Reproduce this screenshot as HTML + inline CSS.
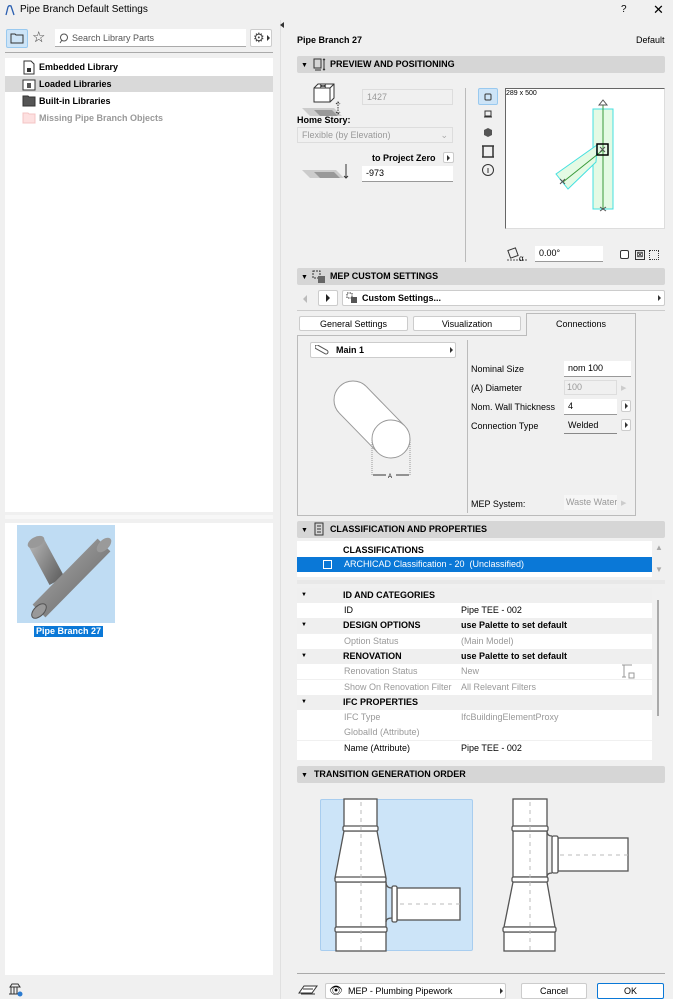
<!DOCTYPE html>
<html><head><meta charset="utf-8"><style>
*{margin:0;padding:0;box-sizing:border-box}
body{width:673px;height:999px;background:#f0f0f0;font-family:"Liberation Sans",sans-serif;font-size:9px;color:#000;position:relative;overflow:hidden}
.a{position:absolute;white-space:nowrap}
.b{font-weight:bold}
.hdr{position:absolute;left:297px;width:368px;height:17px;background:#d6d6d6;border-radius:2px;font-weight:bold;font-size:9px;line-height:17px}
.fld{position:absolute;background:#fff;border-bottom:1px solid #999;height:16px;line-height:15px;padding-left:4px}
.dis{background:#f0f0f0;border:1px solid #ddd;color:#999}
.btn{position:absolute;background:#fff;border:1px solid #ccc;border-radius:2px;text-align:center;line-height:14px}
.tri{position:absolute;width:0;height:0;border-left:3px solid #333;border-top:3px solid transparent;border-bottom:3px solid transparent}
.row{position:absolute;left:297px;width:355px;height:15px;line-height:15px}
.g{background:#efefef;font-weight:bold}
.w{background:#fff}
.gr{color:#999}
</style></head><body>
<!-- title bar -->
<svg class="a" style="left:5px;top:4px" width="10" height="12"><path d="M1 11 L3 3 Q4 1 6 2 L9 11" fill="none" stroke="#2b5fb0" stroke-width="1.3"/></svg>
<div class="a" style="left:20px;top:4px;font-size:10px">Pipe Branch Default Settings</div>
<div class="a" style="left:621px;top:4px;font-size:10px">?</div>
<div class="a" style="left:653px;top:2px;font-size:13px">✕</div>
<!-- toolbar -->
<div class="a" style="left:6px;top:29px;width:22px;height:19px;background:#cde4f7;border:1px solid #99c9ef;border-radius:2px"></div>
<svg class="a" style="left:10px;top:32px" width="14" height="12"><path d="M1 2h4l1 1h7v8H1z" fill="none" stroke="#333"/></svg>
<div class="a" style="left:32px;top:28px;font-size:15px;color:#333">☆</div>
<div class="a" style="left:55px;top:29px;width:191px;height:18px;background:#fff;border-bottom:1px solid #aaa"></div>
<svg class="a" style="left:59px;top:33px" width="10" height="11"><circle cx="5" cy="4.5" r="3.5" fill="none" stroke="#555"/><path d="M3 7L1 10" stroke="#555"/></svg>
<div class="a" style="left:72px;top:33px;color:#555">Search Library Parts</div>
<div class="a" style="left:250px;top:29px;width:22px;height:18px;background:#fff;border:1px solid #ccc;border-radius:2px;font-size:13px;line-height:15px;padding-left:2px;color:#444">⚙</div>
<div class="tri" style="left:267px;top:35px"></div>
<div class="a" style="left:5px;top:52px;width:268px;height:1px;background:#aaa"></div>
<!-- list -->
<div class="a" style="left:5px;top:58px;width:268px;height:454px;background:#fff"></div>
<div class="a" style="left:5px;top:76px;width:268px;height:16px;background:#d9d9d9"></div>
<svg class="a" style="left:22px;top:60px" width="14" height="65">
<path d="M2 1h7l3 3v10H2z" fill="#fff" stroke="#333"/><rect x="5" y="8" width="4" height="4" fill="#333"/>
<rect x="1" y="20" width="12" height="10" fill="#fff" stroke="#333"/><rect x="5" y="23" width="4" height="5" fill="#555"/>
<path d="M1 36h5l1 1h6v9H1z" fill="#555" stroke="#333"/>
<path d="M1 53h5l1 1h6v9H1z" fill="#fde0e0" stroke="#f4c4c4"/></svg>
<div class="a b" style="left:39px;top:62px">Embedded Library</div>
<div class="a b" style="left:39px;top:79px">Loaded Libraries</div>
<div class="a b" style="left:39px;top:96px">Built-in Libraries</div>
<div class="a b" style="left:39px;top:113px;color:#999">Missing Pipe Branch Objects</div>
<div class="a" style="left:5px;top:515px;width:268px;height:4px;background:#f7f7f7"></div>
<div class="a" style="left:5px;top:523px;width:268px;height:452px;background:#fff"></div>
<div class="a" style="left:17px;top:525px;width:98px;height:98px;background:#bfdcf3"></div>
<svg class="a" style="left:17px;top:525px" width="98" height="98">
<defs><linearGradient id="pg" x1="0" y1="0" x2="1" y2="1"><stop offset="0" stop-color="#aaa"/><stop offset=".5" stop-color="#888"/><stop offset="1" stop-color="#666"/></linearGradient></defs>
<path d="M19 17 L40 56" stroke="url(#pg)" stroke-width="17"/>
<ellipse cx="19" cy="17" rx="9" ry="5" transform="rotate(-28 19 17)" fill="#999"/>
<path d="M22 86 L87 20" stroke="url(#pg)" stroke-width="18"/>
<ellipse cx="87" cy="20" rx="9" ry="5" transform="rotate(-45 87 20)" fill="#9a9a9a"/>
<ellipse cx="22" cy="86" rx="9" ry="5" transform="rotate(-45 22 86)" fill="#999" stroke="#555"/>
</svg>
<div class="a b" style="left:34px;top:626px;height:11px;background:#0a78d7;color:#fff;line-height:11px;padding:0 2px">Pipe Branch 27</div>
<svg class="a" style="left:8px;top:982px" width="16" height="15"><path d="M2 5h10M3 5v7M6 5v7M9 5v7M1 12h12M4 2h6l2 3H2z" stroke="#333" fill="none"/><circle cx="12" cy="12" r="2.5" fill="#2b7bd0"/></svg>
<!-- splitter -->
<div class="a" style="left:280px;top:20px;width:1px;height:979px;background:#e0e0e0"></div>
<div class="a" style="left:280px;top:22px;border-right:4px solid #333;border-top:3px solid transparent;border-bottom:3px solid transparent"></div>
<!-- right header -->
<div class="a b" style="left:297px;top:35px">Pipe Branch 27</div>
<div class="a" style="left:636px;top:35px">Default</div>
<div class="hdr" style="top:56px"><span style="margin-left:4px;font-size:7px">▼</span><span style="margin-left:22px">PREVIEW AND POSITIONING</span></div>
<svg class="a" style="left:313px;top:58px" width="14" height="13"><rect x="1" y="1" width="7" height="9" fill="none" stroke="#333"/><path d="M11 1v11M10 2l1-1 1 1M10 11l1 1 1-1M2 12h6" stroke="#333" fill="none"/></svg>
<!-- preview left -->
<svg class="a" style="left:300px;top:80px" width="55" height="112">
<path d="M2 28h32l8 8H10z" fill="#ccc"/><path d="M14 30h18l6 6H20z" fill="#999"/>
<path d="M14 8l4-4h16v14l-4 4H14z M14 8h16v14 M30 8l4-4" fill="#fff" stroke="#333"/><path d="M20 5l6 2M26 5l-6 2" stroke="#333"/>
<path d="M38 22v12M36 24l2-2 2 2M36 32l2 2 2-2" stroke="#333" fill="none" stroke-dasharray="1.5 1"/>
<path d="M2 90h34l8 8H10z" fill="#ccc"/><path d="M14 92h20l6 6H20z" fill="#999"/>
<path d="M46 84v14M44 96l2 2 2-2" stroke="#333" fill="none"/></svg>
<div class="a dis" style="left:362px;top:89px;width:91px;height:16px;line-height:14px;padding-left:4px">1427</div>
<div class="a b" style="left:297px;top:115px">Home Story:</div>
<div class="a dis" style="left:297px;top:127px;width:156px;height:16px;line-height:14px;padding-left:4px">Flexible (by Elevation)<span style="position:absolute;right:4px;color:#aaa">⌄</span></div>
<div class="a b" style="left:372px;top:153px">to Project Zero</div>
<div class="btn" style="left:443px;top:152px;width:11px;height:11px"></div><div class="tri" style="left:447px;top:155px"></div>
<div class="fld" style="left:362px;top:166px;width:91px">-973</div>
<div class="a" style="left:465px;top:88px;width:1px;height:174px;background:#bbb"></div>
<div class="a" style="left:478px;top:88px;width:20px;height:17px;background:#cde4f7;border:1px solid #99c9ef;border-radius:2px"></div>
<svg class="a" style="left:480px;top:90px" width="16" height="90"><rect x="5" y="4" width="6" height="6" rx="1" fill="none" stroke="#333"/>
<path d="M5 21h6v5H5zM4 27h8" stroke="#333" fill="none"/><path d="M4 40l4-2 4 2v5l-4 2-4-2z" fill="#555"/>
<path d="M2 56h12M2 67h12M3 56v11M13 56v11" stroke="#333" fill="none" stroke-width="1.5"/>
<circle cx="8" cy="80" r="5.5" fill="none" stroke="#333"/><path d="M8 78v5" stroke="#333"/></svg>
<div class="a" style="left:505px;top:88px;width:160px;height:141px;background:#fff;border-left:1px solid #666;border-top:1px solid #666;border-right:1px solid #ddd;border-bottom:1px solid #ddd"></div>
<div class="a" style="left:506px;top:90px;font-size:7px">289 x 500</div>
<svg class="a" style="left:0;top:0" width="673" height="260">
<rect x="593" y="109" width="20" height="100" fill="#e4fae4" stroke="#44e0e0"/>
<polygon points="556,174 597,145 596,162 568,189" fill="#e4fae4" stroke="#44e0e0"/>
<path d="M603 105V209M603 150L563 182" stroke="#3a9a3a"/>
<rect x="597" y="144" width="11" height="11" fill="none" stroke="#000" stroke-width="1.5"/>
<path d="M599 105l4-5 4 5zM600 207l6 4M606 207l-6 4M560 179l5 5M565 179l-5 5M600 147l5 5M605 147l-5 5" stroke="#555" fill="none"/>
</svg>
<svg class="a" style="left:505px;top:246px" width="25" height="17"><path d="M2 14h20" stroke="#555" stroke-dasharray="2 1"/><rect x="4" y="3" width="8" height="8" transform="rotate(-20 8 7)" fill="none" stroke="#333"/><text x="14" y="15" font-size="8" font-family="Liberation Sans">α</text></svg>
<div class="fld" style="left:535px;top:246px;width:68px">0.00°</div>
<div class="a" style="left:620px;top:250px;width:9px;height:9px;border:1px solid #333;border-radius:2px;background:#fff"></div>
<div class="a" style="left:635px;top:250px;width:10px;height:10px;border:1px solid #333;text-align:center;font-size:8px;line-height:8px">⊠</div>
<div class="a" style="left:649px;top:250px;width:10px;height:10px;border:1px dotted #333"></div>
<!-- MEP -->
<div class="hdr" style="top:268px"><span style="margin-left:4px;font-size:7px">▼</span><span style="margin-left:22px">MEP CUSTOM SETTINGS</span></div>
<svg class="a" style="left:312px;top:270px" width="14" height="14"><rect x="1" y="1" width="7" height="7" fill="none" stroke="#333" stroke-dasharray="2 1"/><rect x="6" y="6" width="7" height="7" fill="#666"/></svg>
<div class="a" style="left:303px;top:295px;border-right:4px solid #bbb;border-top:4px solid transparent;border-bottom:4px solid transparent"></div>
<div class="btn" style="left:318px;top:290px;width:20px;height:16px"></div>
<div class="a" style="left:326px;top:294px;border-left:4px solid #222;border-top:4px solid transparent;border-bottom:4px solid transparent"></div>
<div class="btn b" style="left:342px;top:290px;width:323px;height:16px;text-align:left;padding-left:19px">Custom Settings...</div>
<svg class="a" style="left:346px;top:292px" width="12" height="12"><rect x="1" y="1" width="5" height="5" fill="none" stroke="#333" stroke-dasharray="1.5 1"/><rect x="5" y="5" width="6" height="6" fill="#555"/></svg>
<div class="tri" style="left:658px;top:295px"></div>
<div class="a" style="left:297px;top:310px;width:368px;height:1px;background:#ccc"></div>
<div class="btn" style="left:299px;top:316px;width:109px;height:15px">General Settings</div>
<div class="btn" style="left:413px;top:316px;width:108px;height:15px">Visualization</div>
<div class="a" style="left:526px;top:313px;width:110px;height:23px;background:#f0f0f0;border:1px solid #bbb;border-bottom:none;text-align:center;line-height:20px">Connections</div>
<div class="a" style="left:297px;top:335px;width:339px;height:181px;border:1px solid #bbb;border-top:none"></div>
<div class="a" style="left:297px;top:335px;width:230px;height:1px;background:#bbb"></div>
<div class="btn b" style="left:310px;top:342px;width:146px;height:16px;text-align:left;padding-left:25px">Main 1</div>
<svg class="a" style="left:315px;top:345px" width="14" height="10"><path d="M2 2l9 5" stroke="#555" fill="none" stroke-width="5" stroke-linecap="round"/><path d="M2 2l9 5" stroke="#fff" stroke-width="3" stroke-linecap="round"/></svg>
<div class="tri" style="left:450px;top:347px"></div>
<div class="a" style="left:467px;top:340px;width:1px;height:173px;background:#bbb"></div>
<svg class="a" style="left:0;top:0" width="673" height="500">
<circle cx="353" cy="400" r="19" fill="#fff" stroke="#999"/>
<polygon points="366.5,386.7 404.5,425.7 377.5,452.3 339.5,413.3" fill="#fff"/>
<path d="M366.5 386.7L404.5 425.7M339.5 413.3L377.5 452.3" stroke="#999"/>
<circle cx="391" cy="439" r="19" fill="#fff" stroke="#999"/>
<path d="M372 440v35M410 440v35" stroke="#999" stroke-dasharray="1 1"/>
<path d="M373 475h13M396 475h13" stroke="#333"/><text x="388" y="478" font-size="6" font-family="Liberation Sans">A</text></svg>
<div class="a" style="left:471px;top:364px">Nominal Size</div>
<div class="fld" style="left:564px;top:361px;width:67px">nom 100</div>
<div class="a" style="left:471px;top:383px">(A) Diameter</div>
<div class="a dis" style="left:564px;top:380px;width:53px;height:15px;padding-left:2px;line-height:13px">100</div>
<div class="a" style="left:621px;top:384px;color:#ccc;font-size:7px">▶</div>
<div class="a" style="left:471px;top:402px">Nom. Wall Thickness</div>
<div class="fld" style="left:564px;top:399px;width:53px">4</div>
<div class="btn" style="left:621px;top:400px;width:10px;height:12px"></div><div class="tri" style="left:625px;top:403px"></div>
<div class="a" style="left:471px;top:421px">Connection Type</div>
<div class="fld" style="left:564px;top:418px;width:53px;background:#f0f0f0;border-bottom:1px solid #888">Welded</div>
<div class="btn" style="left:621px;top:419px;width:10px;height:12px"></div><div class="tri" style="left:625px;top:422px"></div>
<div class="a" style="left:471px;top:499px">MEP System:</div>
<div class="a" style="left:564px;top:495px;width:53px;height:15px;background:#f6f6f6;color:#999;padding-left:2px;line-height:15px;overflow:hidden">Waste Water</div>
<div class="a" style="left:621px;top:499px;color:#ccc;font-size:7px">▶</div>
<!-- classification -->
<div class="hdr" style="top:521px"><span style="margin-left:4px;font-size:7px">▼</span><span style="margin-left:22px">CLASSIFICATION AND PROPERTIES</span></div>
<svg class="a" style="left:314px;top:522px" width="10" height="14"><rect x="1" y="1" width="8" height="12" fill="none" stroke="#333"/><path d="M3 4h4M3 7h4M3 10h4" stroke="#333"/></svg>
<div class="a" style="left:297px;top:541px;width:355px;height:36px;background:#fff"></div>
<div class="a b" style="left:343px;top:545px">CLASSIFICATIONS</div>
<div class="a" style="left:297px;top:557px;width:355px;height:15px;background:#0a78d7;color:#fff;line-height:15px"><span style="position:absolute;left:26px;top:3px;width:9px;height:9px;border:1px solid #fff"></span><span style="position:absolute;left:47px">ARCHICAD Classification - 20&nbsp; (Unclassified)</span></div>
<div class="a" style="left:655px;top:543px;color:#aaa;font-size:8px">▲</div>
<div class="a" style="left:655px;top:565px;color:#aaa;font-size:8px">▼</div>
<div class="a" style="left:297px;top:580px;width:368px;height:4px;background:#e8e8e8"></div>
<div class="row g" style="top:588px"><span class="a" style="left:4px;font-size:6px">▼</span><span class="a" style="left:46px">ID AND CATEGORIES</span></div>
<div class="row w" style="top:603px"><span class="a" style="left:47px">ID</span><span class="a" style="left:164px">Pipe TEE - 002</span></div>
<div class="row g" style="top:618px"><span class="a" style="left:4px;font-size:6px">▼</span><span class="a" style="left:46px">DESIGN OPTIONS</span><span class="a" style="left:164px">use Palette to set default</span></div>
<div class="row w gr" style="top:634px"><span class="a" style="left:47px">Option Status</span><span class="a" style="left:164px">(Main Model)</span></div>
<div class="row g" style="top:649px"><span class="a" style="left:4px;font-size:6px">▼</span><span class="a" style="left:46px">RENOVATION</span><span class="a" style="left:164px">use Palette to set default</span></div>
<div class="row w gr" style="top:664px"><span class="a" style="left:47px">Renovation Status</span><span class="a" style="left:164px">New</span></div>
<div class="row w gr" style="top:680px"><span class="a" style="left:47px">Show On Renovation Filter</span><span class="a" style="left:164px">All Relevant Filters</span></div>
<div class="row g" style="top:695px"><span class="a" style="left:4px;font-size:6px">▼</span><span class="a" style="left:46px">IFC PROPERTIES</span></div>
<div class="row w gr" style="top:710px"><span class="a" style="left:47px">IFC Type</span><span class="a" style="left:164px">IfcBuildingElementProxy</span></div>
<div class="row w gr" style="top:725px"><span class="a" style="left:47px">GlobalId (Attribute)</span></div>
<div class="row w" style="top:741px"><span class="a" style="left:47px">Name (Attribute)</span><span class="a" style="left:164px">Pipe TEE - 002</span></div>
<div class="row w" style="top:756px;height:4px"></div>
<svg class="a" style="left:621px;top:664px" width="14" height="16"><path d="M1 1h10M3 1v12M1 13h4M8 9h5v5H8z" stroke="#999" fill="none"/></svg>
<div class="a" style="left:657px;top:600px;width:2px;height:116px;background:#aaa"></div>
<!-- transition -->
<div class="hdr" style="top:766px"><span style="margin-left:4px;font-size:7px">▼</span><span style="margin-left:6px">TRANSITION GENERATION ORDER</span></div>
<div class="a" style="left:320px;top:799px;width:153px;height:152px;background:#cce4f8;border:1px solid #a8cdef;border-radius:2px"></div>
<svg class="a" style="left:0;top:0" width="673" height="960">
<g fill="#fff" stroke="#555" stroke-width="1.3">
<rect x="344" y="799" width="33" height="28"/>
<polygon points="344,831 377,831 386,878 335,878"/>
<rect x="336" y="882" width="50" height="45"/>
<rect x="336" y="932" width="50" height="19"/>
<rect x="397" y="888" width="63" height="32"/>
<rect x="392" y="886" width="5" height="36" rx="1.5"/>
<rect x="343" y="826" width="35" height="5" rx="1.5"/>
<rect x="335" y="877" width="51" height="5" rx="1.5"/>
<rect x="335" y="927" width="52" height="5" rx="1.5"/>
<path d="M386 882 q0 6 6 6 M386 922 q0 -4 6 -4" fill="none"/>
<rect x="513" y="799" width="34" height="28"/>
<rect x="513" y="831" width="34" height="46"/>
<polygon points="513,882 547,882 555,927 504,927"/>
<rect x="504" y="932" width="51" height="19"/>
<rect x="558" y="838" width="70" height="33"/>
<rect x="552" y="836" width="6" height="37" rx="1.5"/>
<rect x="512" y="826" width="36" height="5" rx="1.5"/>
<rect x="512" y="877" width="36" height="5" rx="1.5"/>
<rect x="503" y="927" width="53" height="5" rx="1.5"/>
<path d="M547 831 q0 5 5 5 M547 877 q0 -4 5 -4" fill="none"/>
</g>
<g stroke="#bbb" stroke-dasharray="4 4"><path d="M361 802V950M400 904H460M530 802V950M560 855H628"/></g>
</svg>
<div class="a" style="left:297px;top:973px;width:368px;height:1px;background:#aaa"></div>
<svg class="a" style="left:298px;top:984px" width="20" height="12"><path d="M1 9l5-7h13l-5 7z" fill="#fff" stroke="#333"/><path d="M3 10h14M5 5h10" stroke="#333"/></svg>
<div class="btn" style="left:325px;top:983px;width:181px;height:16px;text-align:left;padding-left:22px">MEP - Plumbing Pipework</div>
<div class="a" style="left:329px;top:984px;font-size:11px">👁</div>
<div class="tri" style="left:500px;top:988px"></div>
<div class="btn" style="left:521px;top:983px;width:66px;height:16px">Cancel</div>
<div class="btn" style="left:597px;top:983px;width:67px;height:16px;border:1px solid #0a78d7">OK</div>
</body></html>
